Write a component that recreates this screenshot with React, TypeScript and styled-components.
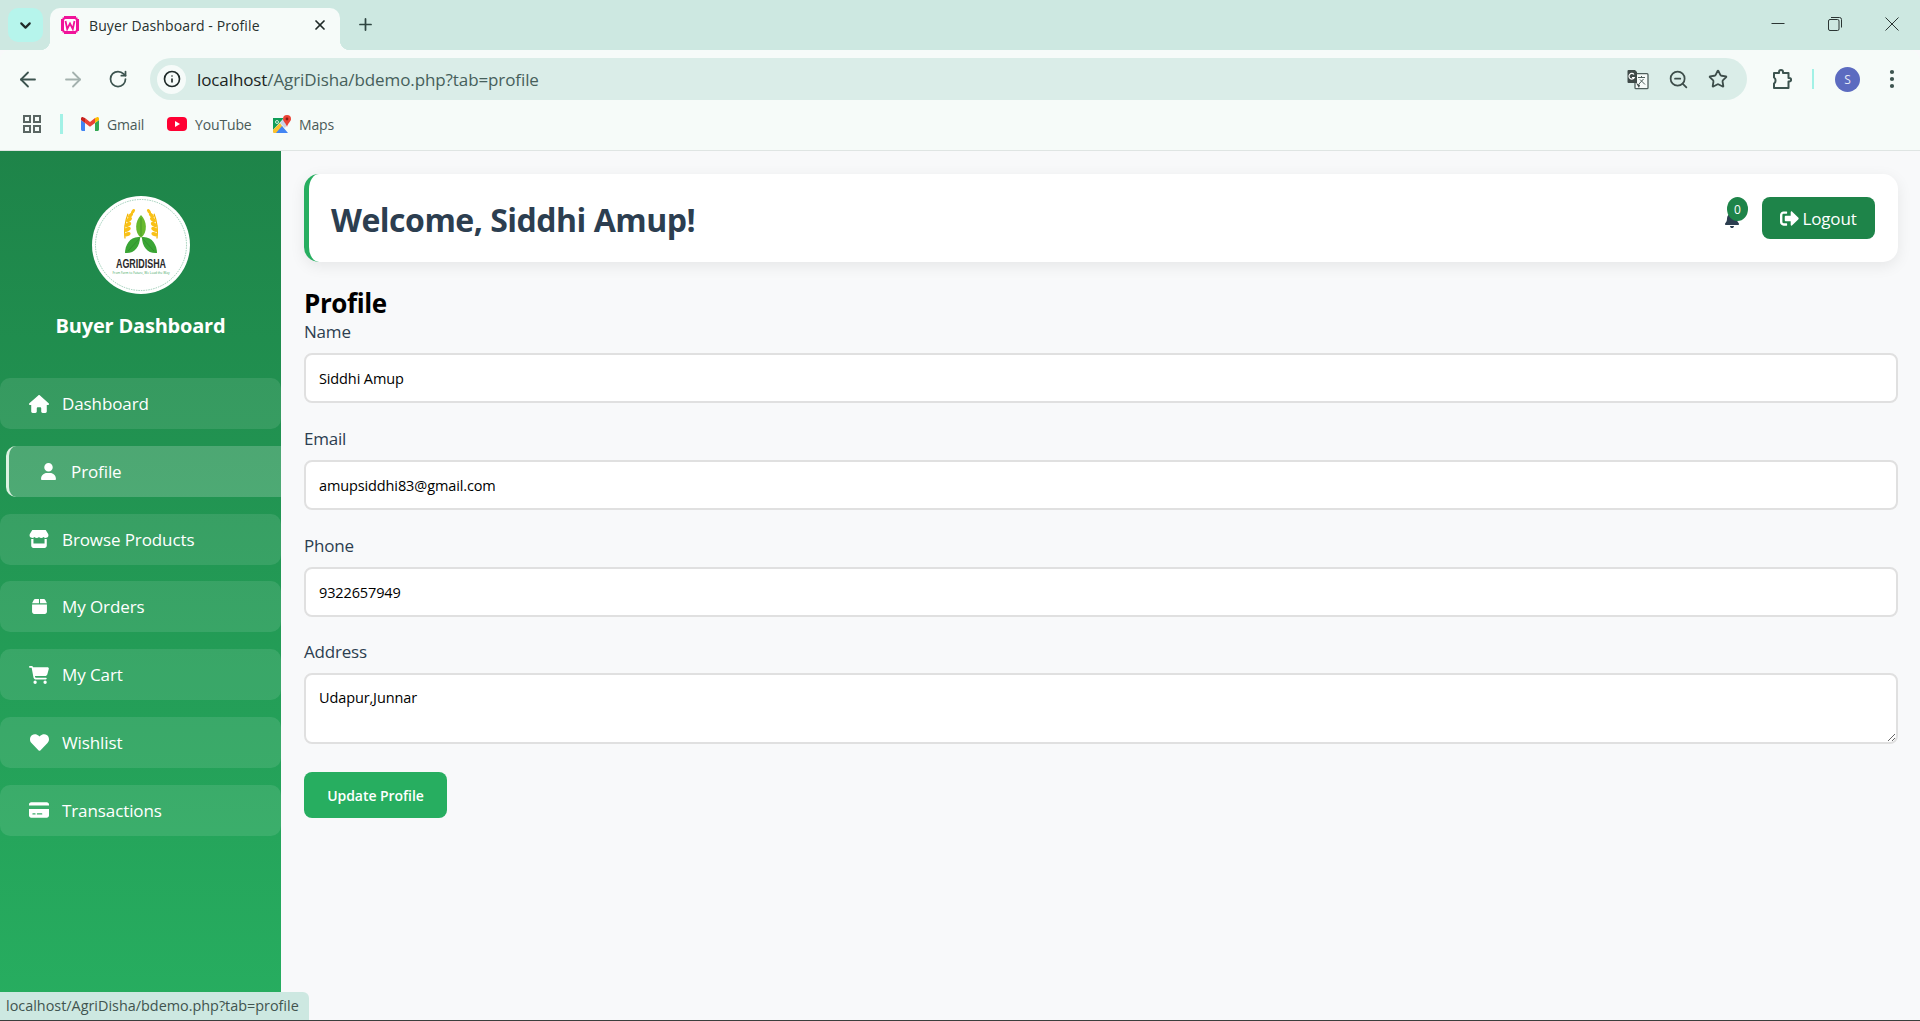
import React from "react";
import styled, { createGlobalStyle } from "styled-components";
import { FaHeart, FaSignOutAlt } from "react-icons/fa";
import { FaStore, FaCreditCard, FaHouse, FaUser, FaBox, FaCartShopping, FaBell } from "react-icons/fa6";
import { ArrowLeft, ArrowRight, RotateCw, Info, X, Plus, ChevronDown, ZoomOut, Star, EllipsisVertical } from "lucide-react";

const Global = createGlobalStyle`
  html, body { margin: 0; padding: 0; height: 1021px; overflow: hidden; }
  body { font-family: "Open Sans", "Noto Sans", sans-serif; background: #f8f9fa; }
  * { box-sizing: border-box; }
`;

const Shell = styled.div`
  display: flex;
  flex-direction: column;
  height: 1021px;
  position: relative;
  border-bottom: 1px solid #3a3f3d;
`;

const TabStrip = styled.div`
  height: 50px;
  flex: none;
  display: flex;
  align-items: flex-start;
  background: #cde8e1;
  padding: 8px 0 0 8px;
`;
const TabSearch = styled.div`
  width: 35px;
  height: 34px;
  border-radius: 10px;
  background: #b6f5ec;
  display: flex;
  align-items: center;
  justify-content: center;
  color: #1f2a28;
`;
const Tab = styled.div`
  position: relative;
  width: 290px;
  height: 42px;
  margin-left: 7px;
  padding: 0 12px 8px 10px;
  background: #f6fbf9;
  border-radius: 10px 10px 0 0;
  display: flex;
  align-items: center;
  gap: 9px;
  color: #27312f;
  font-size: 14px;
  &::before, &::after {
    content: "";
    position: absolute;
    bottom: 0;
    width: 10px;
    height: 10px;
  }
  &::before { left: -10px; background: radial-gradient(circle at 0 0, #cde8e1 10px, #f6fbf9 10.5px); }
  &::after { right: -10px; background: radial-gradient(circle at 100% 0, #cde8e1 10px, #f6fbf9 10.5px); }
`;
const TabTitle = styled.span`
  flex: 1;
  white-space: nowrap;
  letter-spacing: 0.1px;
`;
const NewTab = styled.div`
  margin: 3px 0 0 13px;
  width: 24px;
  height: 26px;
  display: flex;
  align-items: center;
  justify-content: center;
  color: #2f4541;
`;
const WindowControls = styled.div`
  margin-left: auto;
  display: flex;
  align-items: center;
  gap: 43px;
  height: 32px;
  padding: 0 21px 0 0;
`;
const Toolbar = styled.div`
  height: 50px;
  flex: none;
  display: flex;
  align-items: center;
  background: #f6fbf9;
  border-radius: 10px 10px 0 0;
  padding: 8px 16px 0 16px;
  color: #3d5450;
`;
const NavButton = styled.div<{ $faded?: boolean }>`
  width: 24px;
  height: 24px;
  margin-right: 21px;
  display: flex;
  align-items: center;
  justify-content: center;
  color: ${(p) => (p.$faded ? "#a3b1ae" : "#3d5450")};
`;
const Omnibox = styled.div`
  width: 1597px;
  height: 42px;
  margin-left: -1px;
  border-radius: 21px;
  background: #daede8;
  display: flex;
  align-items: center;
  padding: 0 19px 0 7px;
  flex: none;
`;
const InfoChip = styled.div`
  width: 29px;
  height: 29px;
  border-radius: 50%;
  background: #f6fbf9;
  color: #1f2a28;
  display: flex;
  align-items: center;
  justify-content: center;
`;
const UrlText = styled.div`
  margin-left: 11px;
  flex: 1;
  font-size: 17px;
  letter-spacing: -0.1px;
  color: #46605b;
  white-space: nowrap;
`;
const UrlHost = styled.span`
  color: #1b2422;
`;
const OmniIcons = styled.div`
  display: flex;
  align-items: center;
  gap: 19px;
  color: #3d4d4a;
`;
const ToolbarRight = styled.div`
  flex: 1;
  display: flex;
  align-items: center;
  padding-left: 25px;
  color: #3d5450;
`;
const VDivider = styled.div<{ $width: number; $left: number; $right: number }>`
  width: ${(p) => p.$width}px;
  height: 20px;
  margin: 0 ${(p) => p.$right}px 0 ${(p) => p.$left}px;
  background: #a2f1e6;
  flex: none;
`;
const Avatar = styled.div`
  width: 25px;
  height: 25px;
  margin: 0 20px 0 21px;
  border-radius: 50%;
  background: #5c6bc0;
  color: #e8eaf6;
  font-size: 12px;
  display: flex;
  align-items: center;
  justify-content: center;
`;
const Bookmarks = styled.div`
  height: 51px;
  flex: none;
  display: flex;
  align-items: center;
  padding: 0 0 2px 23px;
  background: #f6fbf9;
  border-bottom: 1px solid #dfe5e3;
  font-size: 14px;
  color: #4a5a57;
`;
const Bookmark = styled.div<{ $w: number }>`
  width: ${(p) => p.$w}px;
  display: flex;
  align-items: center;
  gap: 8px;
  flex: none;
  letter-spacing: -0.15px;
`;

const Page = styled.div`
  flex: 1;
  min-height: 0;
  display: flex;
`;
const Sidebar = styled.aside`
  width: 281px;
  flex: none;
  background: linear-gradient(180deg, #1e8449 0%, #27ae60 100%);
  padding-top: 45px;
  color: #fff;
`;
const LogoWrap = styled.div`
  width: 98px;
  height: 98px;
  margin: 0 auto;
  border-radius: 50%;
  background: #fff;
`;
const SideTitle = styled.h3`
  margin: 18px 0 0;
  height: 28px;
  line-height: 28px;
  font-size: 20px;
  font-weight: 700;
  text-align: center;
  letter-spacing: -0.2px;
`;
const Nav = styled.nav`
  margin-top: 38px;
  display: flex;
  flex-direction: column;
  gap: 16.8px;
`;
const NavItem = styled.a<{ $active?: boolean }>`
  height: 51px;
  display: flex;
  align-items: center;
  font-size: 17px;
  letter-spacing: -0.1px;
  color: #fff;
  border-radius: ${(p) => (p.$active ? "10px 0 0 10px" : "10px")};
  background: ${(p) => (p.$active ? "rgba(255,255,255,0.2)" : "rgba(255,255,255,0.1)")};
  margin-left: ${(p) => (p.$active ? "6px" : "0")};
  padding-left: 28px;
  border-left: ${(p) => (p.$active ? "3px solid #dcf3e2" : "0")};
`;
const NavIcon = styled.span`
  width: 22px;
  margin-right: 12px;
  display: flex;
  justify-content: center;
  font-size: 20px;
`;
const Main = styled.main`
  flex: 1;
  min-width: 0;
  padding: 23px 22px 0 23px;
`;
const HeaderCard = styled.header`
  height: 88px;
  background: #fff;
  border-left: 5px solid #27ae60;
  border-radius: 15px;
  box-shadow: 0 4px 15px rgba(0, 0, 0, 0.08);
  display: flex;
  align-items: center;
  padding: 0 23px 0 22px;
`;
const Welcome = styled.h1`
  margin: 0;
  padding-top: 2px;
  flex: 1;
  font-size: 32px;
  font-weight: 700;
  letter-spacing: -0.5px;
  color: #2c3e50;
`;
const BellWrap = styled.div`
  position: relative;
  width: 22px;
  height: 24px;
  margin: 0 16px 4px 0;
  color: #2c3e50;
  font-size: 16px;
  display: flex;
  align-items: flex-end;
`;
const Badge = styled.span`
  position: absolute;
  top: -7px;
  left: 3px;
  width: 21px;
  height: 24px;
  border-radius: 50%;
  background: #1e8449;
  color: #fff;
  font-size: 12px;
  display: flex;
  align-items: center;
  justify-content: center;
`;
const LogoutButton = styled.button`
  width: 113px;
  height: 42px;
  border: 0;
  border-radius: 8px;
  background: #1e8449;
  color: #fff;
  font: inherit;
  font-size: 17px;
  letter-spacing: -0.15px;
  display: flex;
  align-items: center;
  justify-content: center;
  gap: 3px;
`;
const SectionTitle = styled.h2`
  margin: 25px 0 0;
  height: 34px;
  line-height: 33px;
  font-size: 26px;
  font-weight: 700;
  letter-spacing: -0.4px;
  color: #000;
`;
const Field = styled.div`
  margin-bottom: 24.8px;
`;
const Label = styled.label`
  display: block;
  height: 22px;
  line-height: 22px;
  margin-bottom: 10px;
  font-size: 17px;
  font-weight: 500;
  letter-spacing: -0.2px;
  color: #2c3e50;
`;
const TextInput = styled.input`
  display: block;
  width: 100%;
  height: 50px;
  padding: 1px 13px 0;
  border: 2px solid #e0e0e0;
  border-radius: 8px;
  background: #fff;
  color: #000;
  font: inherit;
  font-size: 14.5px;
  letter-spacing: -0.12px;
  outline: none;
`;
const TextArea = styled.textarea`
  display: block;
  width: 100%;
  height: 71px;
  padding: 13px 13px;
  border: 2px solid #e0e0e0;
  border-radius: 8px;
  background: #fff;
  color: #000;
  font: inherit;
  font-size: 14.5px;
  letter-spacing: -0.12px;
  outline: none;
  resize: both;
`;
const SubmitButton = styled.button`
  width: 143px;
  height: 46px;
  margin-top: 3px;
  border: 0;
  border-radius: 8px;
  background: #27ae60;
  color: #fff;
  font: inherit;
  font-size: 14px;
  font-weight: 600;
  letter-spacing: -0.05px;
`;
const StatusBubble = styled.div`
  position: absolute;
  left: 0;
  bottom: 0;
  width: 309px;
  height: 28px;
  padding-left: 6px;
  background: #cde8e1;
  border-top-right-radius: 6px;
  font-size: 14.4px;
  line-height: 28px;
  color: #41544f;
  white-space: nowrap;
`;
const LogoName = styled.text`
  font-family: "Liberation Sans", sans-serif;
  font-size: 13px;
  font-weight: 700;
  fill: #2a2a2a;
`;
const LogoTag = styled.text`
  font-family: "Open Sans", sans-serif;
  font-size: 3px;
  fill: #3aa55a;
`;

const WampIcon = () => (
  <svg width="20" height="20" viewBox="0 0 20 20">
    <path d="M4 1h12v1.500h1.500V4H19v12h-1.500v1.500H16V19H4v-1.500H2.500V16H1V4h1.500V2.500H4z" fill="#f0149a" />
    <rect x="4" y="4" width="12" height="12" rx="1.500" fill="#fff" />
    <path d="M5.500 6 7.200 14 10 8.500 12.800 14 14.500 6" fill="none" stroke="#f0149a" strokeWidth="1.800" />
  </svg>
);
const GmailIcon = () => (
  <svg width="18" height="14" viewBox="0 0 18 14">
    <path d="M0 3v9.500C0 13.300.7 14 1.500 14H4V6z" fill="#4285f4" />
    <path d="M14 6v8h2.500c.8 0 1.500-.7 1.500-1.500V3z" fill="#34a853" />
    <path d="M14 1v5l4-3V1.500C18 0 16.400-.5 15.400.5z" fill="#fbbc04" />
    <path d="M4 6V1l5 4 5-4v5l-5 3.800z" fill="#ea4335" />
    <path d="M0 1.500V3l4 3V1L2.600.5C1.600-.5 0 0 0 1.500z" fill="#c5221f" />
  </svg>
);
const YoutubeIcon = () => (
  <svg width="20" height="14" viewBox="0 0 20 14">
    <rect width="20" height="14" rx="4" fill="#ff0033" />
    <path d="M8 4l5 3-5 3z" fill="#fff" />
  </svg>
);
const MapsIcon = () => (
  <svg width="18" height="18" viewBox="0 0 18 18">
    <path d="M0 3h11L0 15z" fill="#0f9d58" />
    <path d="M0 15 7 8l7 10H1a1 1 0 0 1-1-1z" fill="#fbc02d" />
    <path d="M3 18 9 11l6 7z" fill="#4285f4" />
    <path d="M7 8l4-5 4 5-3 5z" fill="#c8d4e8" />
    <path d="M14 0a4 4 0 0 1 4 4c0 2.500-3 4-4 8-1-4-4-5.500-4-8a4 4 0 0 1 4-4z" fill="#ea4335" />
    <circle cx="14" cy="4" r="1.400" fill="#8e1b14" />
    <circle cx="4" cy="7" r="1.500" fill="none" stroke="#fff" strokeWidth=".8" />
  </svg>
);
const TranslateIcon = () => (
  <svg width="22" height="21" viewBox="0 0 22 21">
    <rect x="8" y="4.700" width="13" height="15" rx="1" fill="#f6fbf9" stroke="#4f5f5c" strokeWidth="1.300" />
    <path d="M1.500 1H8l2 2v11H1.500A1 1 0 0 1 .5 13V2a1 1 0 0 1 1-1z" fill="#3f4a48" />
    <path d="M7 5.500A2.800 2.800 0 1 0 7.300 8.500H5" fill="none" stroke="#fff" strokeWidth="1.200" />
    <path d="M11 8.500h7M14.500 7v2M12 15l4.500-5M13 10.500l5 5" stroke="#4f5f5c" strokeWidth="1" fill="none" />
    <path d="M9 14l3 5 1-3z" fill="#3f4a48" />
  </svg>
);
const GridIcon = () => (
  <svg width="18" height="18" viewBox="0 0 18 18" fill="none" stroke="#5a6663" strokeWidth="2">
    <rect x="1" y="1" width="6" height="6" />
    <rect x="11" y="1" width="6" height="6" />
    <rect x="1" y="11" width="6" height="6" />
    <rect x="11" y="11" width="6" height="6" />
  </svg>
);
const MinimizeIcon = () => (
  <svg width="14" height="14" viewBox="0 0 14 14" fill="none" stroke="#2b3533" strokeWidth="1">
    <path d="M.5 6.500h13" />
  </svg>
);
const RestoreIcon = () => (
  <svg width="14" height="14" viewBox="0 0 14 14" fill="none" stroke="#2b3533" strokeWidth="1">
    <rect x=".5" y="2.500" width="10.500" height="11" rx="1.500" />
    <path d="M3 .5h8.500a2 2 0 0 1 2 2v8" />
  </svg>
);
const CloseIcon = () => (
  <svg width="14" height="14" viewBox="0 0 14 14" fill="none" stroke="#2b3533" strokeWidth="1">
    <path d="M.5.500l13 13M13.500.5l-13 13" />
  </svg>
);
const PuzzleIcon = () => (
  <svg width="20" height="21" viewBox="0 0 20 21" fill="none" stroke="currentColor" strokeWidth="2" strokeLinejoin="round">
    <path d="M2 4h5V3a2 2 0 0 1 4 0v1h5.500v5h.8a1.800 1.800 0 0 1 0 3.600h-.8V19H2v-4.500a3.200 3.200 0 0 0 1.500-3 3.200 3.200 0 0 0-1.500-3z" />
  </svg>
);
const Wheat = ({ flip }: { flip?: boolean }) => (
  <g transform={flip ? "translate(98 -5) scale(-1 1.080)" : "translate(0 -5) scale(1 1.080)"} fill="#f9c116">
    <path d="M33 44 C32 36 33 28 36 21" fill="none" stroke="#f0b400" strokeWidth="1.200" />
    <ellipse cx="35.500" cy="40" rx="3.200" ry="1.800" transform="rotate(-20 35.500 40)" />
    <ellipse cx="35.500" cy="35.500" rx="3.400" ry="1.900" transform="rotate(-25 35.500 35.500)" />
    <ellipse cx="36" cy="31" rx="3.400" ry="1.900" transform="rotate(-30 36 31)" />
    <ellipse cx="37" cy="26.500" rx="3.300" ry="1.800" transform="rotate(-35 37 26.500)" />
    <ellipse cx="38.500" cy="22.500" rx="3" ry="1.700" transform="rotate(-40 38.500 22.500)" />
    <ellipse cx="41" cy="19" rx="2.600" ry="1.500" transform="rotate(-50 41 19)" />
  </g>
);
const AgridishaLogo = () => (
  <svg width="98" height="98" viewBox="0 0 98 98">
    <circle cx="49" cy="49" r="45.500" fill="none" stroke="#5fae8a" strokeWidth=".6" strokeDasharray="1.500 1" />
    <Wheat />
    <Wheat flip />
    <path d="M49 19C43 25 42 36 49 42 56 36 55 25 49 19z" fill="#67b92e" />
    <path d="M48 41C38 40 33 49 33 57 42 58 48 51 48 41z" fill="#3aa535" />
    <path d="M50 41C60 40 65 49 65 57 56 58 50 51 50 41z" fill="#3aa535" />
    <path d="M49 22V40M48 42 36 55M50 42 62 55" stroke="#2a7d2a" strokeWidth=".5" fill="none" />
    <LogoName x="49" y="72" textAnchor="middle" textLength="50" lengthAdjust="spacingAndGlyphs">AGRIDISHA</LogoName>
    <LogoTag x="49" y="78" textAnchor="middle" textLength="57" lengthAdjust="spacingAndGlyphs">From Farm to Future, We Lead the Way</LogoTag>
  </svg>
);

const navItems = [
  { label: "Dashboard", icon: <FaHouse /> },
  { label: "Profile", icon: <FaUser size={17} />, active: true },
  { label: "Browse Products", icon: <FaStore /> },
  { label: "My Orders", icon: <FaBox size={17} /> },
  { label: "My Cart", icon: <FaCartShopping /> },
  { label: "Wishlist", icon: <FaHeart size={19} /> },
  { label: "Transactions", icon: <FaCreditCard /> },
];

const fields = [
  { label: "Name", value: "Siddhi Amup", type: "text" },
  { label: "Email", value: "amupsiddhi83@gmail.com", type: "email" },
  { label: "Phone", value: "9322657949", type: "text" },
];

export default function App() {
  return (
    <Shell>
      <Global />
      <TabStrip>
        <TabSearch><ChevronDown size={17} strokeWidth={3} /></TabSearch>
        <Tab>
          <WampIcon />
          <TabTitle>Buyer Dashboard - Profile</TabTitle>
          <X size={16} strokeWidth={2.6} color="#1f2a28" />
        </Tab>
        <NewTab><Plus size={19} strokeWidth={2.2} /></NewTab>
        <WindowControls>
          <MinimizeIcon />
          <RestoreIcon />
          <CloseIcon />
        </WindowControls>
      </TabStrip>
      <Toolbar>
        <NavButton><ArrowLeft size={25} strokeWidth={1.8} /></NavButton>
        <NavButton $faded><ArrowRight size={25} strokeWidth={1.8} /></NavButton>
        <NavButton><RotateCw size={20} strokeWidth={2.1} /></NavButton>
        <Omnibox>
          <InfoChip><Info size={18} strokeWidth={2.2} /></InfoChip>
          <UrlText><UrlHost>localhost</UrlHost>/AgriDisha/bdemo.php?tab=profile</UrlText>
          <OmniIcons>
            <TranslateIcon />
            <ZoomOut size={21} strokeWidth={2} />
            <Star size={20} strokeWidth={2.2} />
          </OmniIcons>
        </Omnibox>
        <ToolbarRight>
          <PuzzleIcon />
          <VDivider $width={2} $left={20} $right={0} />
          <Avatar>S</Avatar>
          <EllipsisVertical size={24} strokeWidth={2.2} />
        </ToolbarRight>
      </Toolbar>
      <Bookmarks>
        <GridIcon />
        <VDivider $width={3} $left={19} $right={18} />
        <Bookmark $w={86}><GmailIcon />Gmail</Bookmark>
        <Bookmark $w={106}><YoutubeIcon />YouTube</Bookmark>
        <Bookmark $w={80}><MapsIcon />Maps</Bookmark>
      </Bookmarks>
      <Page>
        <Sidebar>
          <LogoWrap><AgridishaLogo /></LogoWrap>
          <SideTitle>Buyer Dashboard</SideTitle>
          <Nav>
            {navItems.map((item) => (
              <NavItem key={item.label} $active={item.active}>
                <NavIcon>{item.icon}</NavIcon>
                {item.label}
              </NavItem>
            ))}
          </Nav>
        </Sidebar>
        <Main>
          <HeaderCard>
            <Welcome>Welcome, Siddhi Amup!</Welcome>
            <BellWrap>
              <FaBell />
              <Badge>0</Badge>
            </BellWrap>
            <LogoutButton><FaSignOutAlt size={19} />Logout</LogoutButton>
          </HeaderCard>
          <SectionTitle>Profile</SectionTitle>
          {fields.map((f) => (
            <Field key={f.label}>
              <Label>{f.label}</Label>
              <TextInput type={f.type} defaultValue={f.value} />
            </Field>
          ))}
          <Field>
            <Label>Address</Label>
            <TextArea defaultValue="Udapur,Junnar" />
          </Field>
          <SubmitButton type="button">Update Profile</SubmitButton>
        </Main>
      </Page>
      <StatusBubble>localhost/AgriDisha/bdemo.php?tab=profile</StatusBubble>
    </Shell>
  );
}
